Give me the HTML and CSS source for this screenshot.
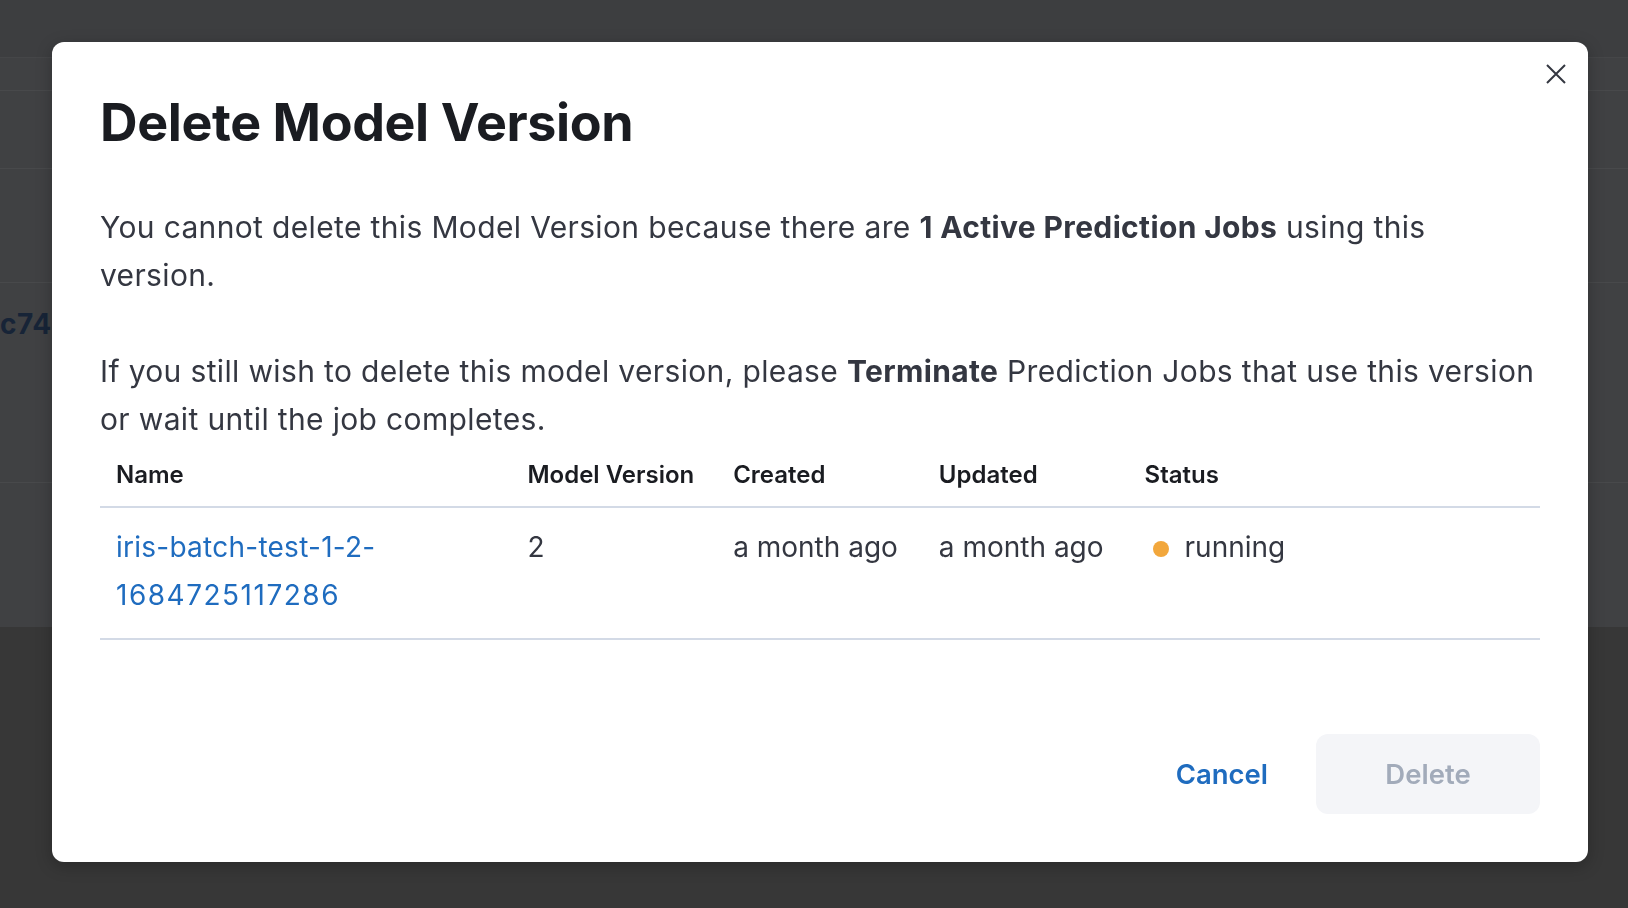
FILE: index.html
```html
<!DOCTYPE html>
<html lang="en">
<head>
<meta charset="utf-8">
<title>Delete Model Version</title>
<link rel="stylesheet" href="styles.css">
</head>
<body>
<div class="page">
  <div class="page-top"></div>
  <div class="page-row row-a"></div>
  <div class="page-row row-b"></div>
  <div class="page-row row-c"></div>
  <div class="page-row row-d"><span class="hash">c74</span></div>
  <div class="page-row row-e"></div>
  <div class="page-bottom"></div>
</div>

<div class="overlay">
  <div class="modal" role="dialog" aria-labelledby="modal-title">
    <button class="close" type="button" aria-label="Close">
      <svg width="20" height="20" viewBox="0 0 20 20" aria-hidden="true">
        <path d="M1 1 L19 19 M19 1 L1 19" stroke="#343741" stroke-width="2" fill="none"/>
      </svg>
    </button>

    <h1 class="title" id="modal-title">Delete Model Version</h1>

    <div class="body">
      <p class="para">You cannot delete this Model Version because there are <strong>1 Active Prediction Jobs</strong> using this<br>version.</p>
      <p class="para para-last">If you still wish to delete this model version, please <strong>Terminate</strong> Prediction Jobs that use this version<br>or wait until the job completes.</p>

      <table class="jobs">
        <colgroup>
          <col class="col-wide">
          <col class="col-narrow">
          <col class="col-narrow">
          <col class="col-narrow">
          <col class="col-wide">
        </colgroup>
        <thead>
          <tr>
            <th>Name</th>
            <th>Model Version</th>
            <th>Created</th>
            <th>Updated</th>
            <th>Status</th>
          </tr>
        </thead>
        <tbody>
          <tr>
            <td><a class="link" href="#">iris-batch-test-1-2-<wbr><span class="num">1684725117286</span></a></td>
            <td>2</td>
            <td>a month ago</td>
            <td>a month ago</td>
            <td><span class="dot"></span><span class="status-text">running</span></td>
          </tr>
        </tbody>
      </table>
    </div>

    <div class="footer">
      <button class="btn-empty" type="button">Cancel</button>
      <button class="btn-disabled" type="button" disabled>Delete</button>
    </div>
  </div>
</div>
</body>
</html>
```

FILE: styles.css
```css
* {
  box-sizing: border-box;
}

html, body {
  margin: 0;
  padding: 0;
  height: 100%;
}

body {
  font-family: "Inter", "Noto Sans", sans-serif;
  background: #383838;
  overflow: hidden;
}

/* dimmed page underneath */
.page {
  display: flex;
  flex-direction: column;
  height: 100%;
}

.page-top {
  height: 58px;
  background: #3d3e40;
  border-bottom: 1px solid #454648;
}

.page-row {
  background: #404143;
  border-bottom: 1px solid #48494b;
}

.row-a { height: 33px; }
.row-b { height: 78px; }
.row-c { height: 114px; }
.row-d {
  height: 200px;
  padding-top: 27px;
}
.row-e {
  height: 144px;
  border-bottom: none;
}

.page-bottom {
  flex: 1;
  background: #373737;
}

.hash {
  display: block;
  font-size: 28px;
  line-height: 28px;
  font-weight: 700;
  color: #172437;
  letter-spacing: 0.5px;
}

/* overlay + modal */
.overlay {
  position: fixed;
  inset: 0;
  display: flex;
  padding: 42px 40px 46px 52px;
}

.modal {
  position: relative;
  flex: 1;
  display: flex;
  flex-direction: column;
  background: #ffffff;
  border-radius: 12px;
  padding: 48px;
  box-shadow: 0 4px 16px rgba(0, 0, 0, 0.25);
}

.close {
  position: absolute;
  top: 12px;
  right: 12px;
  width: 40px;
  height: 40px;
  padding: 0;
  border: none;
  background: transparent;
  display: flex;
  align-items: center;
  justify-content: center;
  cursor: pointer;
}

.title {
  margin: 0;
  font-size: 52px;
  line-height: 66px;
  font-weight: 700;
  color: #1a1c21;
  letter-spacing: -0.4px;
}

.body {
  margin-top: 47px;
  color: #343741;
  font-size: 30px;
  line-height: 48px;
}

.para {
  margin: 0 0 48px;
  letter-spacing: 0.35px;
}

.para-last {
  margin-bottom: 0;
}

.para strong {
  font-weight: 700;
}

.jobs {
  width: 100%;
  table-layout: fixed;
  border-collapse: collapse;
}

.col-wide { width: 28.5714%; }
.col-narrow { width: 14.2857%; }

.jobs th {
  text-align: left;
  font-size: 24px;
  line-height: 36px;
  font-weight: 600;
  color: #1a1c21;
  padding: 14px 16px 13px;
  border-bottom: 2px solid #d3dae6;
}

.jobs td {
  vertical-align: top;
  font-size: 28px;
  line-height: 48px;
  color: #343741;
  padding: 15px 16px 19px;
  border-bottom: 2px solid #d3dae6;
}

.link {
  color: #1f6cbf;
  text-decoration: none;
  letter-spacing: 0.25px;
}

.num {
  letter-spacing: 1.5px;
}

.dot {
  display: inline-block;
  width: 16px;
  height: 16px;
  border-radius: 50%;
  background: #f2a73c;
  vertical-align: middle;
  margin: 0 16px 0 8px;
}

.footer {
  margin-top: auto;
  display: flex;
  justify-content: flex-end;
  align-items: center;
  gap: 32px;
}

.btn-empty,
.btn-disabled {
  font-family: inherit;
  font-size: 27.5px;
  font-weight: 600;
  border: none;
  height: 80px;
  border-radius: 12px;
}

.btn-empty {
  background: transparent;
  color: #1f6cbf;
  padding: 0 16px;
  cursor: pointer;
}

.btn-disabled {
  min-width: 224px;
  padding: 0 24px;
  background: #f4f5f8;
  color: #a2abba;
}
```
